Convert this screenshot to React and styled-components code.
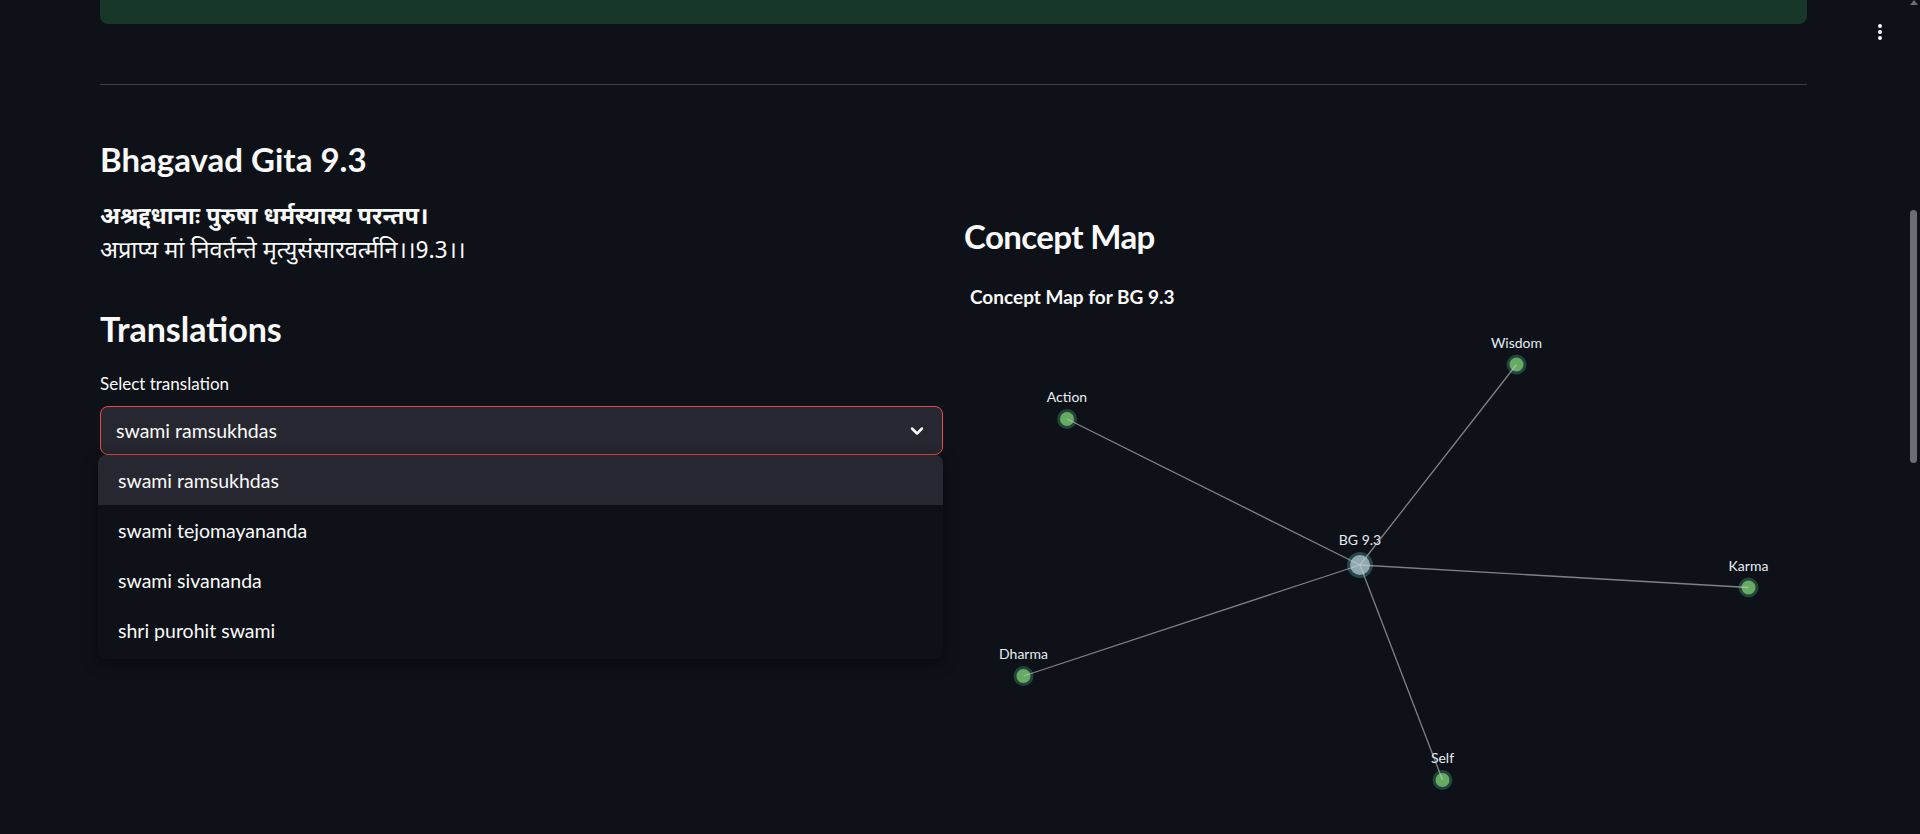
import React from 'react';
import styled, { createGlobalStyle } from 'styled-components';

// page wide defaults, dark streamlit-ish theme
const GlobalStyle = createGlobalStyle`
  html, body {
    margin: 0;
    padding: 0;
    background: #0e1117;
    overflow: hidden;
  }
  body {
    font-family: 'Lato', 'Noto Sans', sans-serif;
    color: #fafafa;
  }
  * {
    box-sizing: border-box;
  }
`;

const Page = styled.div`
  position: relative;
  height: 834px;
  overflow: hidden;
  background: #0e1117;
`;

const Main = styled.main`
  padding: 0 113px 0 100px;
`;

const SuccessBox = styled.div`
  height: 24px;
  background: #173828;
  border-radius: 0 0 8px 8px;
`;

const Divider = styled.hr`
  margin: 60px 0 0;
  border: none;
  height: 1px;
  background: #3d4044;
`;

const Columns = styled.div`
  display: grid;
  grid-template-columns: 843px 843px;
  column-gap: 21px;
  margin-top: 54px;
`;

const Column = styled.section`
  display: flex;
  flex-direction: column;
  padding-top: ${p => p.$offset || 0}px;
`;

const Heading = styled.h3`
  margin: ${p => p.$top || 0}px 0 0;
  font-size: ${p => p.$size || 34}px;
  line-height: 41px;
  font-weight: 700;
  letter-spacing: ${p => p.$tight || 0}px;
  color: #fafafa;
`;

const Verse = styled.div`
  margin-top: 22px;
  font-family: 'Noto Sans Devanagari', 'Lohit Devanagari', 'Noto Sans', sans-serif;
  font-size: 23.5px;
  line-height: 34px;
`;

const VerseLine = styled.div`
  font-weight: ${p => (p.$bold ? 700 : 400)};
`;

const Label = styled.label`
  display: block;
  margin-top: 24px;
  font-size: 17px;
  line-height: 21px;
  color: #fafafa;
`;

const SelectWrap = styled.div`
  position: relative;
  margin-top: 12px;
`;

const SelectBox = styled.div`
  display: flex;
  align-items: center;
  justify-content: space-between;
  height: 49px;
  padding: 0 15px 0 15px;
  background: #262730;
  border: 1px solid #e9484b;
  border-radius: 8px;
  font-size: 19.5px;
  color: #fafafa;
`;

const Chevron = styled.svg`
  width: 20px;
  height: 20px;
  flex: none;
`;

const Menu = styled.ul`
  position: absolute;
  top: 100%;
  left: -2px;
  right: 0;
  margin: 0;
  padding: 0 0 4px;
  list-style: none;
  background: #0e1117;
  border-radius: 8px;
  overflow: hidden;
  box-shadow: 0 4px 16px rgba(0, 0, 0, 0.45);
  z-index: 5;
`;

const MenuItem = styled.li`
  height: 50px;
  display: flex;
  align-items: center;
  padding-left: 20px;
  font-size: 19.5px;
  color: #fafafa;
  background: ${p => (p.$active ? '#262730' : 'transparent')};
`;

const MapTitle = styled.div`
  margin-top: 28px;
  padding-left: 6px;
  font-size: 19px;
  line-height: 23px;
  font-weight: 700;
`;

const Graph = styled.svg`
  display: block;
  margin-top: 2px;
  overflow: visible;
`;

const NodeLabel = styled.text`
  font-family: 'Lato', 'Noto Sans', sans-serif;
  font-size: 14px;
  fill: #e4edf4;
`;

const Kebab = styled.div`
  position: absolute;
  top: 24px;
  left: 1878px;
  display: flex;
  flex-direction: column;
  gap: 2px;
`;

const Dot = styled.span`
  width: 4px;
  height: 4px;
  border-radius: 50%;
  background: #fafafa;
`;

const ScrollThumb = styled.div`
  position: absolute;
  left: 1910px;
  top: 210px;
  width: 7px;
  height: 253px;
  border-radius: 4px;
  background: #6c6e73;
`;

const ScrollArrow = styled.div`
  position: absolute;
  left: 1910px;
  top: 0;
  width: 0;
  height: 0;
  border-left: 4px solid transparent;
  border-right: 4px solid transparent;
  border-bottom: 5px solid #6c6e73;
`;

const translations = [
  'swami ramsukhdas',
  'swami tejomayananda',
  'swami sivananda',
  'shri purohit swami',
];

// node positions measured on the canvas of the concept map
const center = { id: 'BG 9.3', x: 396, y: 255 };
const concepts = [
  { id: 'Wisdom', x: 552.5, y: 54.5 },
  { id: 'Action', x: 103, y: 109 },
  { id: 'Karma', x: 784.5, y: 277.5 },
  { id: 'Dharma', x: 59.5, y: 366 },
  { id: 'Self', x: 478.5, y: 470 },
];

const ConceptGraph = () => (
  <Graph width="843" height="500" viewBox="0 0 843 500">
    {concepts.map(c => (
      <g key={c.id}>
        <circle cx={c.x} cy={c.y} r="8.5" fill="#67ab62" stroke="#22443b" strokeWidth="3" />
        <NodeLabel x={c.x} y={c.y - 17} textAnchor="middle">{c.id}</NodeLabel>
      </g>
    ))}
    <circle cx={center.x} cy={center.y} r="11.5" fill="#8fa9b2" stroke="#27474a" strokeWidth="3" />
    <NodeLabel x={center.x} y={center.y - 20} textAnchor="middle">{center.id}</NodeLabel>
    {concepts.map(c => (
      <line
        key={c.id + '-edge'}
        x1={center.x}
        y1={center.y}
        x2={c.x}
        y2={c.y}
        stroke="rgba(205, 205, 205, 0.6)"
        strokeWidth="1.3"
      />
    ))}
  </Graph>
);

export default function App() {
  return (
    <>
      <GlobalStyle />
      <Page>
        <Main>
          <SuccessBox />
          <Divider />
          <Columns>
            <Column>
              <Heading $size={33}>Bhagavad Gita 9.3</Heading>
              <Verse>
                <VerseLine $bold>अश्रद्दधानाः पुरुषा धर्मस्यास्य परन्तप।</VerseLine>
                <VerseLine>अप्राप्य मां निवर्तन्ते मृत्युसंसारवर्त्मनि।।9.3।।</VerseLine>
              </Verse>
              <Heading $top={38}>Translations</Heading>
              <Label>Select translation</Label>
              <SelectWrap>
                <SelectBox>
                  <span>{translations[0]}</span>
                  <Chevron viewBox="0 0 24 24" fill="none" stroke="#fafafa" strokeWidth="3" strokeLinecap="round" strokeLinejoin="round">
                    <path d="M6 9l6 6 6-6" />
                  </Chevron>
                </SelectBox>
                <Menu>
                  {translations.map((t, i) => (
                    <MenuItem key={t} $active={i === 0}>{t}</MenuItem>
                  ))}
                </Menu>
              </SelectWrap>
            </Column>
            <Column $offset={77}>
              <Heading $size={33} $tight={-0.6}>Concept Map</Heading>
              <MapTitle>Concept Map for BG 9.3</MapTitle>
              <ConceptGraph />
            </Column>
          </Columns>
        </Main>
        <Kebab>
          <Dot />
          <Dot />
          <Dot />
        </Kebab>
        <ScrollArrow />
        <ScrollThumb />
      </Page>
    </>
  );
}
